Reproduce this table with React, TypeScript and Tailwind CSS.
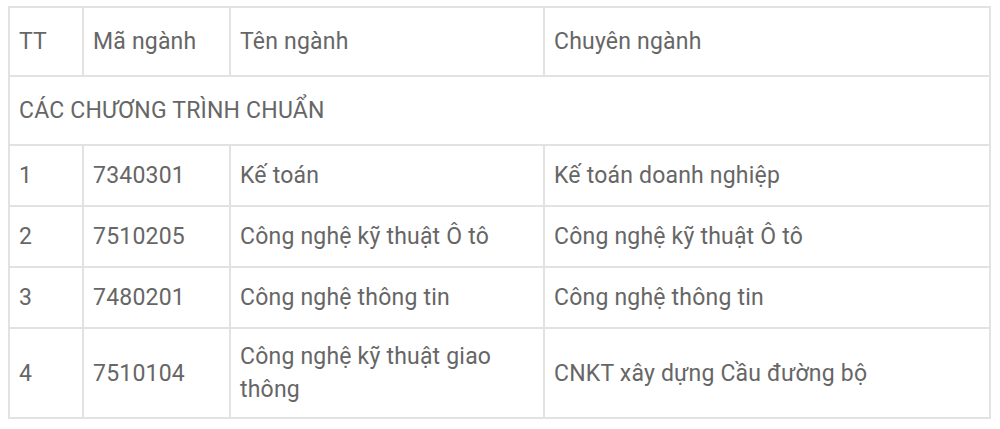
const rows = [
  { tt: '1', code: '7340301', name: 'Kế toán', major: 'Kế toán doanh nghiệp', h: 'h-[61px]' },
  { tt: '2', code: '7510205', name: 'Công nghệ kỹ thuật Ô tô', major: 'Công nghệ kỹ thuật Ô tô', h: 'h-[61px]' },
  { tt: '3', code: '7480201', name: 'Công nghệ thông tin', major: 'Công nghệ thông tin', h: 'h-[61px]' },
  { tt: '4', code: '7510104', name: 'Công nghệ kỹ thuật giao thông', major: 'CNKT xây dựng Cầu đường bộ', h: 'h-[90px]' },
];

const cell = 'border-2 border-[#e2e2e2] pl-[9px] pr-[10px] py-0 align-middle font-normal text-left';

export default function App() {
  return (
    <div className="min-h-[429px] w-[1000px] bg-white pl-[8px] pt-[6px] font-['Roboto','Liberation_Sans',sans-serif] text-[23px] leading-[33px] tracking-[0.2px] text-[#666666]">
      <table className="w-[983px] table-fixed border-collapse">
        <colgroup>
          <col className="w-[74px]" />
          <col className="w-[147px]" />
          <col className="w-[314px]" />
          <col />
        </colgroup>
        <thead>
          <tr className="h-[69px]">
            <th className={cell}>TT</th>
            <th className={cell}>Mã ngành</th>
            <th className={cell}>Tên ngành</th>
            <th className={cell}>Chuyên ngành</th>
          </tr>
        </thead>
        <tbody>
          <tr className="h-[69px]">
            <td colSpan={4} className={cell}>
              CÁC CHƯƠNG TRÌNH CHUẨN
            </td>
          </tr>
          {rows.map((r) => (
            <tr key={r.tt} className={r.h}>
              <td className={cell}>{r.tt}</td>
              <td className={cell}>{r.code}</td>
              <td className={cell}>{r.name}</td>
              <td className={cell}>{r.major}</td>
            </tr>
          ))}
        </tbody>
      </table>
    </div>
  );
}
